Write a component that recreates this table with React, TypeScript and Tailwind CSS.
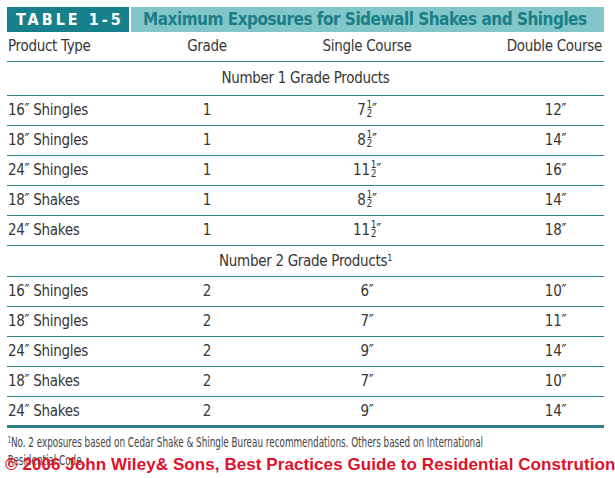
import React from 'react';

const Frac = ({ whole }: { whole: string }) => (
  <span className="inline-flex items-start">
    <span>{whole}</span>
    <span className="ml-[1px] mt-[1px] flex flex-col items-center text-[10px] leading-[9px]">
      <span>1</span>
      <span>2</span>
    </span>
    <span>″</span>
  </span>
);

type Row = { type: string; grade: string; single: React.ReactNode; double: string };

const group1: Row[] = [
  { type: '16″ Shingles', grade: '1', single: <Frac whole="7" />, double: '12″' },
  { type: '18″ Shingles', grade: '1', single: <Frac whole="8" />, double: '14″' },
  { type: '24″ Shingles', grade: '1', single: <Frac whole="11" />, double: '16″' },
  { type: '18″ Shakes', grade: '1', single: <Frac whole="8" />, double: '14″' },
  { type: '24″ Shakes', grade: '1', single: <Frac whole="11" />, double: '18″' },
];

const group2: Row[] = [
  { type: '16″ Shingles', grade: '2', single: '6″', double: '10″' },
  { type: '18″ Shingles', grade: '2', single: '7″', double: '11″' },
  { type: '24″ Shingles', grade: '2', single: '9″', double: '14″' },
  { type: '18″ Shakes', grade: '2', single: '7″', double: '10″' },
  { type: '24″ Shakes', grade: '2', single: '9″', double: '14″' },
];

const cols = 'grid grid-cols-[160px_80px_240px_1fr] items-center';

const DataRow = ({ row, last }: { row: Row; last?: boolean }) => (
  <div
    className={`${cols} ${last ? 'h-[31px] border-b-[3px]' : 'h-[30px] border-b'} border-[#2b7f85]`}
  >
    <div className="pl-[1px]">{row.type}</div>
    <div className="text-center">{row.grade}</div>
    <div className="text-center">{row.single}</div>
    <div className="pl-[20px] text-center">{row.double}</div>
  </div>
);

export default function App() {
  return (
    <div className="relative h-[478px] w-[615px] overflow-hidden bg-white font-['DejaVu_Sans_Condensed','DejaVu_Sans',sans-serif] text-[15px] tracking-[-0.3px] text-[#363636]">
      <div className="ml-[7px] w-[597px] pt-[7px]">
        {/* title bar */}
        <div className="flex h-[25px] gap-[2px] whitespace-nowrap">
          <div className="flex w-[122px] items-center bg-[#17808a] pl-[9px] text-[16px] font-bold tracking-[3px] text-white">
            TABLE 1-5
          </div>
          <div className="flex flex-1 items-center bg-[#82c6ca] pl-[12px] text-[17px] font-bold tracking-[-0.5px] text-[#1b7f87]">
            Maximum Exposures for Sidewall Shakes and Shingles
          </div>
        </div>

        {/* column heads */}
        <div className={`${cols} h-[30px] border-b border-[#2b7f85]`}>
          <div className="pl-[1px]">Product Type</div>
          <div className="text-center">Grade</div>
          <div className="text-center">Single Course</div>
          <div className="pr-[2px] text-right">Double Course</div>
        </div>

        <div className="flex h-[34px] items-center justify-center border-b border-[#2b7f85]">
          Number 1 Grade Products
        </div>
        {group1.map((r, i) => (
          <DataRow key={i} row={r} />
        ))}

        <div className="flex h-[31px] items-center justify-center border-b border-[#2b7f85]">
          <span>
            Number 2 Grade Products<sup className="text-[9px]">1</sup>
          </span>
        </div>
        {group2.map((r, i) => (
          <DataRow key={i} row={r} last={i === group2.length - 1} />
        ))}

        <p className="w-[700px] origin-left scale-x-[0.7] pl-[1px] pt-[5px] text-[14px] leading-[18px] tracking-normal text-[#444]">
          <sup className="text-[8px]">1</sup>No. 2 exposures based on Cedar Shake &amp; Shingle Bureau recommendations. Others based on International Residential Code.
        </p>
      </div>

      {/* watermark */}
      <div className="absolute left-[5px] top-[452px] whitespace-nowrap font-['Liberation_Sans',Arial,sans-serif] text-[17px] font-bold tracking-[0.08px] text-[#e0112b]">
        © 2006 John Wiley&amp; Sons, Best Practices Guide to Residential Constrution
      </div>
    </div>
  );
}
